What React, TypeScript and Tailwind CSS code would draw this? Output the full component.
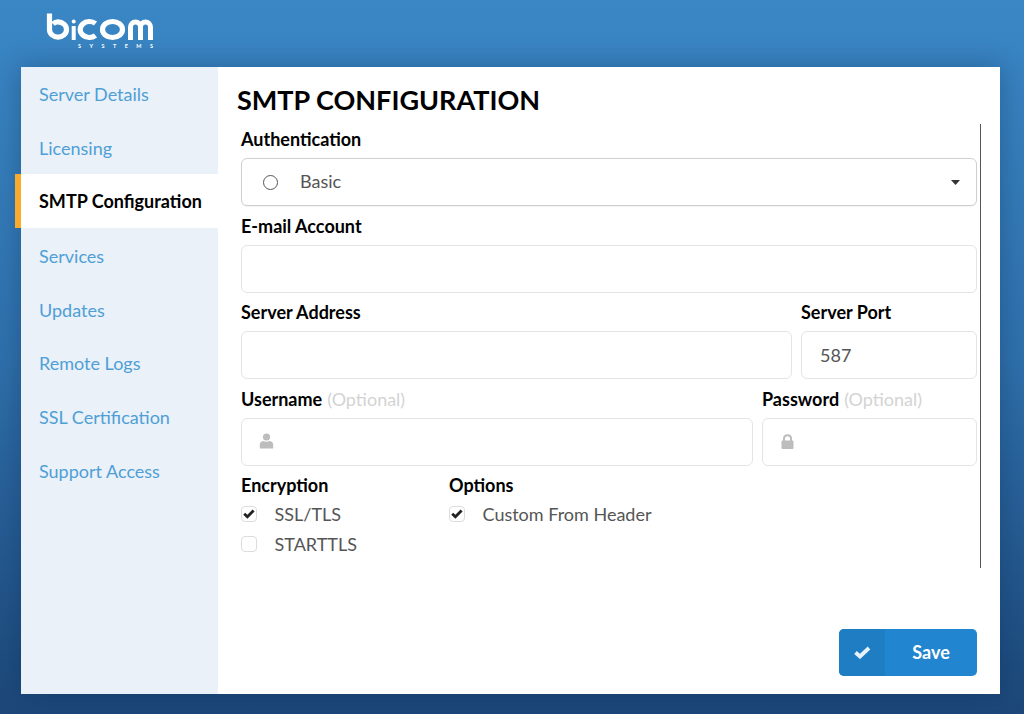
import React from "react";

const font = { fontFamily: '"Lato", sans-serif' };

const nav = ["Server Details", "Licensing", "SMTP Configuration", "Services", "Updates", "Remote Logs", "SSL Certification", "Support Access"];

function Logo() {
  return (
    <div className="relative w-[110px] h-[40px]">
      <svg width="110" height="34" viewBox="0 0 110 34" fill="none" stroke="white" strokeWidth="5.2" className="block">
        <path d="M4.5 1.5 V17.5 A8.5 7.7 0 1 0 13 9.8 C11 9.8 9.5 10.5 8 12" />
        <path d="M28.7 14 V28" strokeWidth="4" />
        <circle cx="28.7" cy="9.6" r="2" fill="white" stroke="none" />
        <path d="M50.5 11.5 A9.2 8 0 1 0 50.5 23.5" />
        <ellipse cx="67.5" cy="17.5" rx="10" ry="8" />
        <path d="M85.5 28 V15 A5 5 0 0 1 95.5 15 V28 M95.5 15 A5 5 0 0 1 105.5 15 V28" strokeWidth="5" />
      </svg>
      <div className="absolute left-[33px] top-[31px] w-[75px] flex justify-between text-[5.5px] leading-[6px] text-white font-bold">
        {"SYSTEMS".split("").map((c, i) => (
          <span key={i}>{c}</span>
        ))}
      </div>
    </div>
  );
}

function Label({ children, optional }: { children: React.ReactNode; optional?: boolean }) {
  return (
    <div className="h-[38.5px] pt-[2px] flex items-center text-[18px] font-bold text-black whitespace-nowrap">
      <span>{children}</span>
      {optional && <span className="ml-[5px] font-normal text-[#d3d3d3]">(Optional)</span>}
    </div>
  );
}

function Field({ children }: { children?: React.ReactNode }) {
  return (
    <div className="h-[48px] border border-[#e4e4e4] rounded-[6px] bg-white flex items-center text-[18px] text-[#555]">
      {children}
    </div>
  );
}

function Check({ checked, label }: { checked?: boolean; label: string }) {
  return (
    <div className="flex items-center h-[30px]">
      <div className="w-[16px] h-[16px] border border-[#dcdcdc] rounded-[4px] bg-white flex items-center justify-center">
        {checked && (
          <svg width="12" height="10" viewBox="0 0 12 10" fill="none" stroke="#222" strokeWidth="2.8">
            <path d="M1.2 4.8 L4.4 7.8 L10.6 1.6" />
          </svg>
        )}
      </div>
      <span className="ml-[17.5px] text-[18px] text-[#555] whitespace-nowrap">{label}</span>
    </div>
  );
}

export default function App() {
  return (
    <div
      style={font}
      className="h-[714px] overflow-hidden bg-gradient-to-b from-[#3a87c5] via-[#2f70ab] to-[#1c4778] flex flex-col"
    >
      <header className="h-[66.5px] shrink-0 pl-[45px] pt-[12px]">
        <Logo />
      </header>
      <div className="ml-[21px] w-[978.5px] h-[627px] flex bg-white shadow-[0_0_24px_rgba(10,40,80,0.35)]">
        <nav className="w-[197px] shrink-0 bg-[#eaf1f8]">
          {nav.map((n) => {
            const active = n === "SMTP Configuration";
            return (
              <div
                key={n}
                className={
                  active
                    ? "h-[53.9px] -ml-[6px] pl-[18px] border-l-[6px] border-[#fbab2c] bg-white flex items-center text-[18px] font-bold text-black whitespace-nowrap"
                    : "h-[53.9px] pl-[18px] pt-[2px] flex items-center text-[18px] text-[#4f9fd6] whitespace-nowrap"
                }
              >
                {n}
              </div>
            );
          })}
        </nav>
        <main className="flex-1 flex flex-col pl-[19px]">
          <h1 className="h-[57.5px] pt-[15px] text-[27px] leading-[36px] font-bold text-black whitespace-nowrap">
            SMTP CONFIGURATION
          </h1>
          <div className="ml-[4px] w-[740px] h-[444px] border-r border-[#555] pr-[3px]">
            <div className="h-[34px] pb-[4px] flex items-center text-[18px] font-bold text-black">Authentication</div>
            <div className="h-[48px] border border-[#cfcfcf] rounded-[6px] bg-white flex items-center text-[18px] text-[#555] pl-[21px] pr-[16px] shadow-[0_1px_1px_rgba(0,0,0,0.05)]">
              <span className="w-[15px] h-[15px] rounded-full border-[1.5px] border-[#555]" />
              <span className="ml-[22px] flex-1 pb-[2px]">Basic</span>
              <svg width="9" height="5" viewBox="0 0 9 5" fill="#333"><path d="M0 0 H9 L4.5 5 Z" /></svg>
            </div>
            <Label>E-mail Account</Label>
            <Field />
            <div className="flex gap-[9px]">
              <div className="flex-1">
                <Label>Server Address</Label>
                <Field />
              </div>
              <div className="w-[176px]">
                <Label>Server Port</Label>
                <Field><span className="pl-[18px]">587</span></Field>
              </div>
            </div>
            <div className="flex gap-[9px]">
              <div className="flex-1">
                <Label optional>Username</Label>
                <Field>
                  <svg className="ml-[17px] -mt-[1px]" width="15" height="16" viewBox="0 0 15 16" fill="#bdbdbd">
                    <circle cx="7.5" cy="4" r="3.6" />
                    <path d="M0.8 15.5 V11.5 C0.8 9.2 2.8 8 4.5 8 C6 9 9 9 10.5 8 C12.2 8 14.2 9.2 14.2 11.5 V15.5 Z" />
                  </svg>
                </Field>
              </div>
              <div className="w-[215px]">
                <Label optional>Password</Label>
                <Field>
                  <svg className="ml-[18px] -mt-[1px]" width="13" height="15" viewBox="0 0 13 15" fill="none">
                    <path d="M3 7 V4.5 C3 2.5 4.5 1.2 6.5 1.2 C8.5 1.2 10 2.5 10 4.5 V7" stroke="#bdbdbd" strokeWidth="2" />
                    <rect x="0.5" y="6.5" width="12" height="8.5" rx="1" fill="#bdbdbd" />
                  </svg>
                </Field>
              </div>
            </div>
            <div className="flex">
              <div className="w-[208px]">
                <Label>Encryption</Label>
                <div className="-mt-[5px]">
                  <Check checked label="SSL/TLS" />
                  <Check label="STARTTLS" />
                </div>
              </div>
              <div>
                <Label>Options</Label>
                <div className="-mt-[5px]">
                  <Check checked label="Custom From Header" />
                </div>
              </div>
            </div>
          </div>
          <div className="mt-[61px] ml-[4px] w-[736px] flex justify-end">
            <button className="w-[138px] h-[47px] rounded-[5px] bg-[#2185d0] flex items-stretch overflow-hidden text-white">
              <span className="w-[46px] bg-[#1f7dc4] flex items-center justify-center">
                <svg width="17" height="13" viewBox="0 0 17 13" fill="none" stroke="#e8f2fa" strokeWidth="3.8">
                  <path d="M1.5 6.5 L6 10.5 L15 2" />
                </svg>
              </span>
              <span className="flex-1 flex items-center justify-center text-[18px] font-bold">Save</span>
            </button>
          </div>
        </main>
      </div>
    </div>
  );
}
